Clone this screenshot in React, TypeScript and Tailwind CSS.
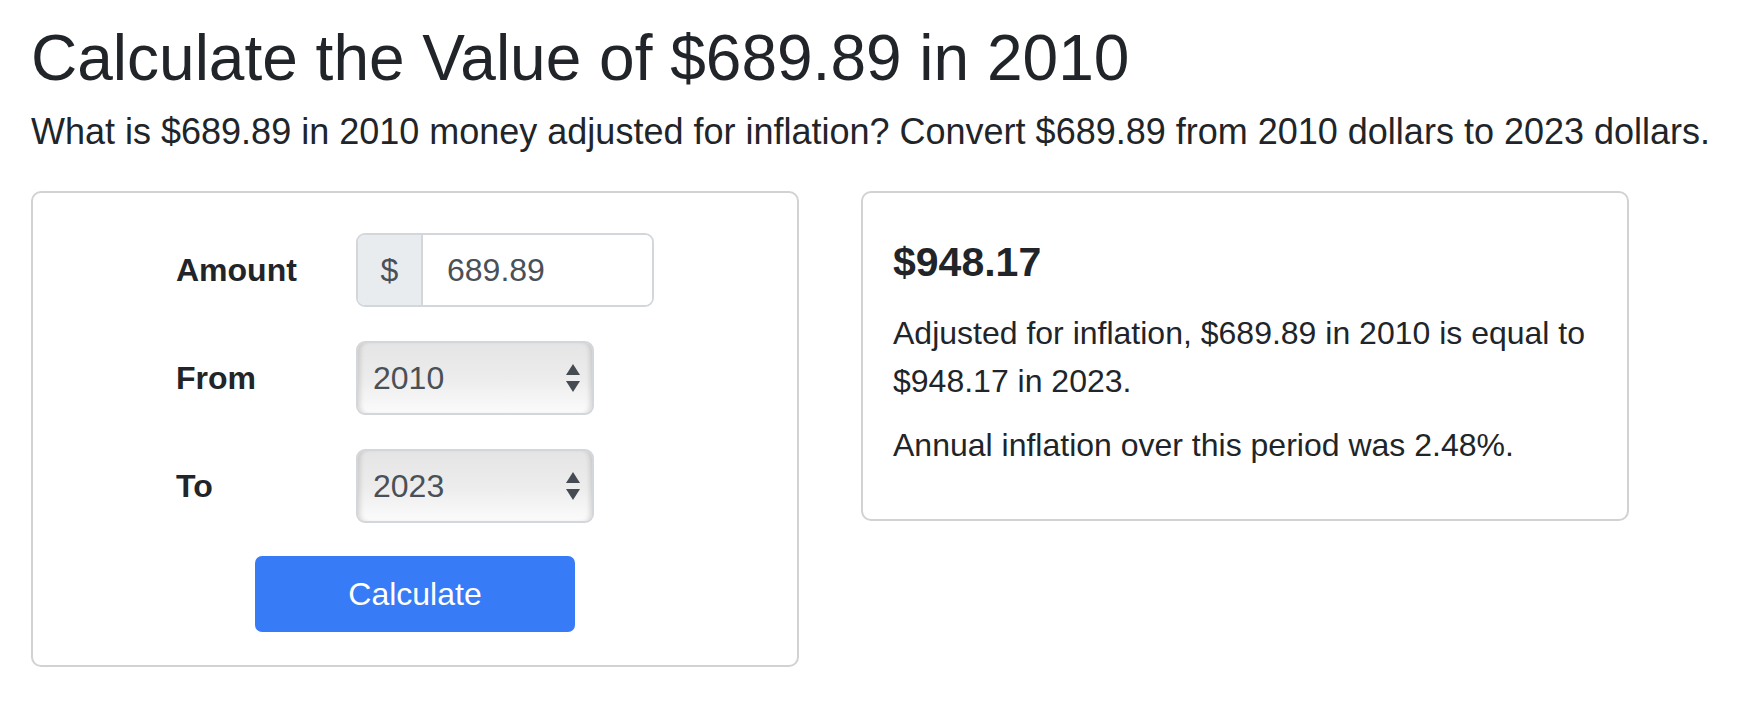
import React from 'react';

const font = { fontFamily: '"Liberation Sans", Arial, Helvetica, sans-serif' };

function SelectBox({ value }: { value: string }) {
  return (
    <div className="relative w-[238px] h-[74px] rounded-[9px] border-2 border-[#d3d6da] bg-gradient-to-b from-[#e5e5e5] via-[#ececec] to-[#fbfbfb] shadow-[inset_5px_0_5px_-3px_rgba(0,0,0,0.14),inset_-5px_0_5px_-3px_rgba(0,0,0,0.14)] flex items-center pl-[15px]">
      <span className="text-[32px] text-[#495057]">{value}</span>
      <svg className="absolute right-[12px] top-1/2 -translate-y-1/2" width="14" height="28" viewBox="0 0 14 28">
        <path d="M7 0 L14 11 L0 11 Z" fill="#454b52" />
        <path d="M0 17 L14 17 L7 28 Z" fill="#454b52" />
      </svg>
    </div>
  );
}

function Row({ label, children }: { label: string; children: React.ReactNode }) {
  return (
    <div className="flex items-center">
      <label className="w-[180px] text-[32px] font-bold leading-none">{label}</label>
      {children}
    </div>
  );
}

export default function App() {
  return (
    <div className="bg-white min-h-[704px] pl-[31px] pt-[20px] text-[#212529]" style={font}>
      <h1 className="text-[64px] leading-[1.2] font-normal">Calculate the Value of $689.89 in 2010</h1>
      <p className="text-[36px] leading-[1.5] mt-[8px]">
        What is $689.89 in 2010 money adjusted for inflation? Convert $689.89 from 2010 dollars to 2023 dollars.
      </p>

      <div className="flex items-start gap-[62px] mt-[32px]">
        {/* form card */}
        <div className="w-[768px] border-2 border-[#d2d2d2] rounded-[10px] pt-[40px] pb-[33px]">
          <div className="flex flex-col gap-[34px] pl-[143px]">
            <Row label="Amount">
              <div className="flex w-[298px] h-[74px] rounded-[9px] border-2 border-[#d3d6da] overflow-hidden">
                <div className="w-[65px] bg-[#e9ecef] border-r-2 border-[#d3d6da] flex items-center justify-center text-[32px] text-[#495057]">$</div>
                <div className="flex-1 bg-white flex items-center pl-[24px] text-[32px] text-[#495057]">689.89</div>
              </div>
            </Row>
            <Row label="From">
              <SelectBox value="2010" />
            </Row>
            <Row label="To">
              <SelectBox value="2023" />
            </Row>
          </div>
          <div className="flex justify-center mt-[33px]">
            <button className="w-[320px] h-[76px] rounded-[7px] bg-[#387bf6] text-white text-[32px]">Calculate</button>
          </div>
        </div>

        {/* result card */}
        <div className="w-[768px] border-2 border-[#d2d2d2] rounded-[10px] px-[30px] pt-[45px] pb-[34px]">
          <div className="text-[41px] font-bold leading-[1.2]">$948.17</div>
          <p className="text-[32px] leading-[1.5] mt-[22px]">
            Adjusted for inflation, $689.89 in 2010 is equal to $948.17 in 2023.
          </p>
          <p className="text-[32px] leading-[1.5] mt-[16px] mb-[16px]">Annual inflation over this period was 2.48%.</p>
        </div>
      </div>
    </div>
  );
}
